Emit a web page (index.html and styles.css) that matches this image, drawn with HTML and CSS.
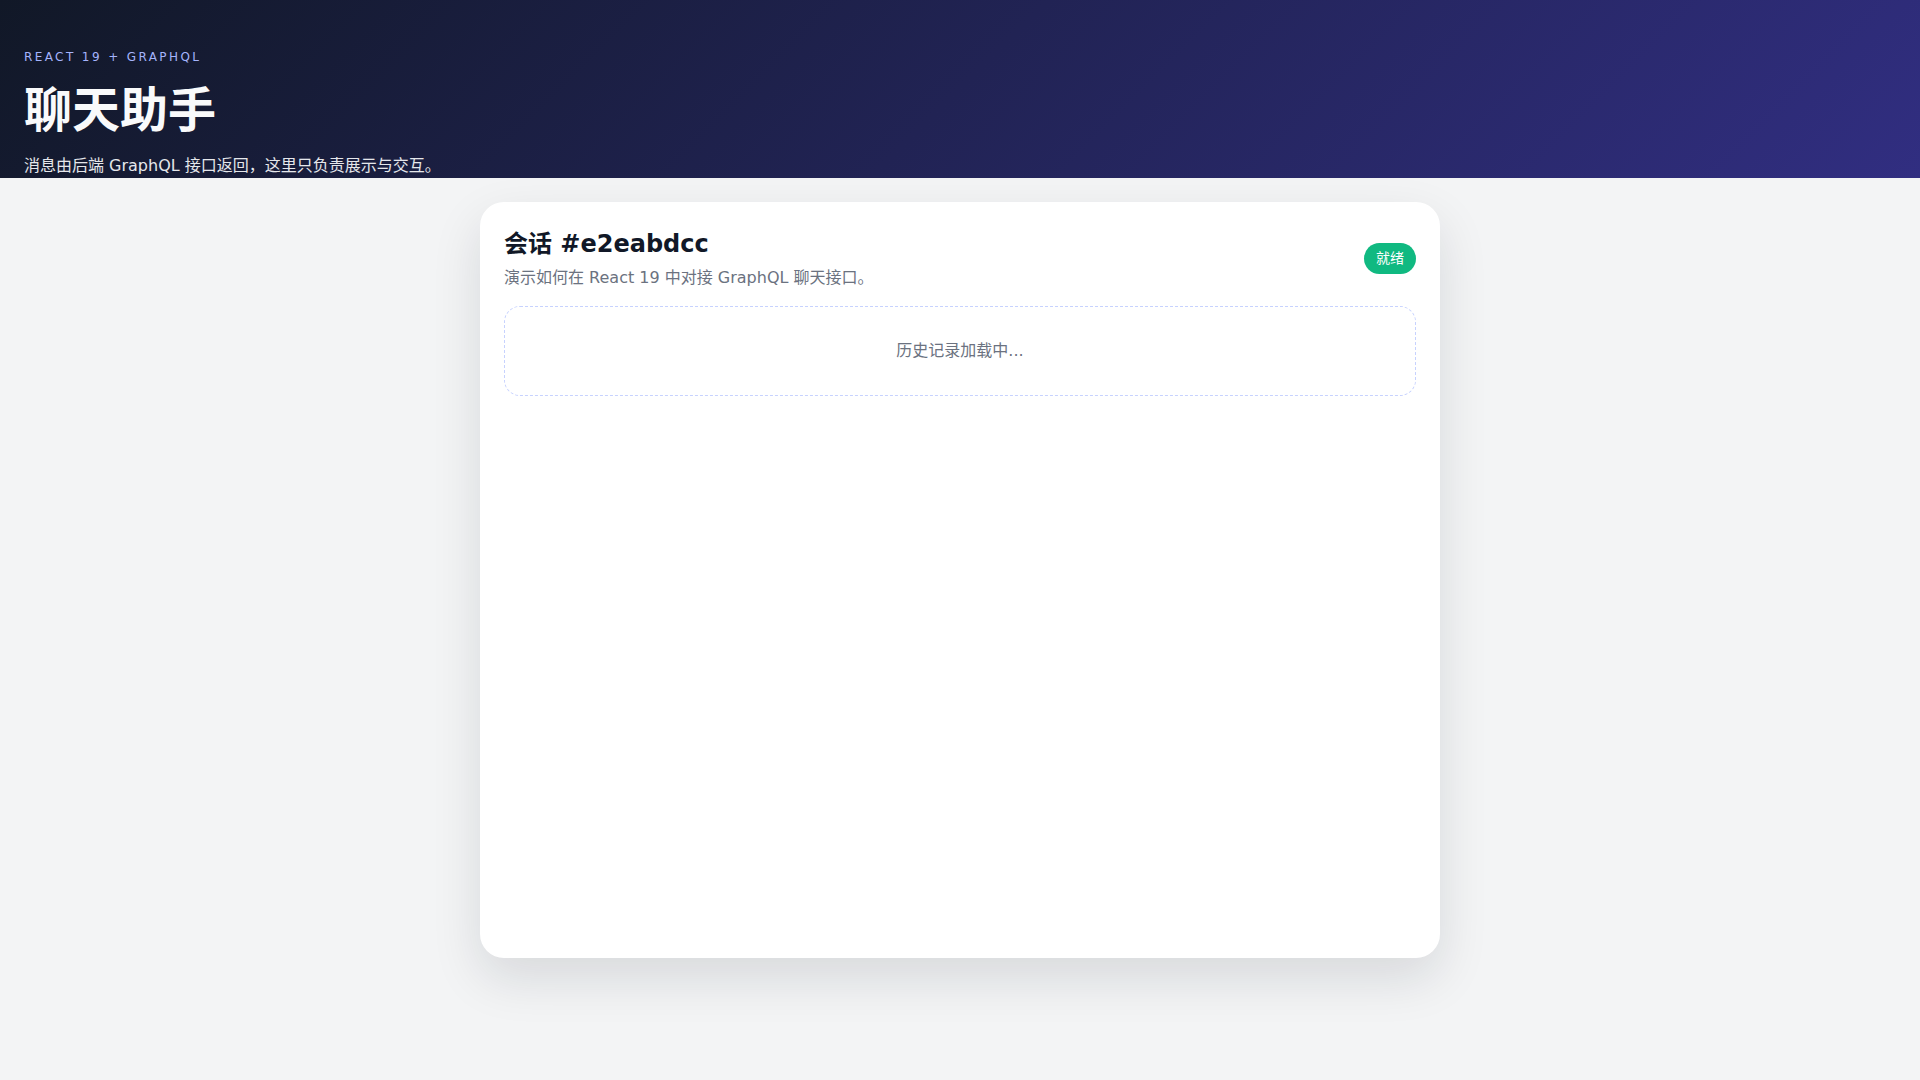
FILE: index.html
```html
<!DOCTYPE html>
<html lang="zh-CN">
<head>
<meta charset="utf-8">
<title>聊天助手</title>
<link rel="stylesheet" href="styles.css">
</head>
<body>
<header class="hero">
  <p class="eyebrow">React 19 + GraphQL</p>
  <h1 class="hero-title">聊天助手</h1>
  <p class="hero-sub">消息由后端 GraphQL 接口返回，这里只负责展示与交互。</p>
</header>
<main class="main">
  <section class="card">
    <div class="card-head">
      <div class="card-head-text">
        <h2 class="card-title">会话 #e2eabdcc</h2>
        <p class="card-sub">演示如何在 React 19 中对接 GraphQL 聊天接口。</p>
      </div>
      <span class="badge">就绪</span>
    </div>
    <div class="loading">历史记录加载中...</div>
  </section>
</main>
</body>
</html>
```

FILE: styles.css
```css
* {
  box-sizing: border-box;
}

html, body {
  margin: 0;
  padding: 0;
}

body {
  background: #f3f4f5;
  font-family: "DejaVu Sans", "Noto Sans CJK SC", sans-serif;
  color: #111827;
  min-height: 100vh;
}

.hero {
  height: 178px;
  padding: 49px 24px 0;
  background: linear-gradient(135deg, #111827 0%, #312e81 100%);
  color: #f9fafb;
}

.eyebrow {
  margin: 0 0 17px;
  font-size: 12px;
  line-height: 16px;
  letter-spacing: 0.2em;
  text-transform: uppercase;
  color: #a5b4fc;
}

.hero-title {
  margin: 0 0 14px;
  font-size: 48px;
  line-height: 57.6px;
  font-weight: 700;
  color: #f9fafb;
}

.hero-sub {
  margin: 0;
  font-size: 16px;
  line-height: 24px;
  color: #e5e7eb;
}

.main {
  padding-top: 24px;
  display: flex;
  justify-content: center;
}

.card {
  width: 960px;
  height: 70vh;
  background: #ffffff;
  border-radius: 24px;
  padding: 24px;
  box-shadow: 0 20px 50px rgba(15, 23, 42, 0.12);
  display: flex;
  flex-direction: column;
  gap: 16px;
}

.card-head {
  display: flex;
  justify-content: space-between;
  align-items: center;
  gap: 16px;
}

.card-title {
  margin: 0;
  font-size: 24px;
  line-height: 36px;
  font-weight: 700;
  color: #111827;
}

.card-sub {
  margin: 4px 0 0;
  font-size: 16px;
  line-height: 24px;
  color: #6b7280;
}

.badge {
  display: inline-block;
  padding: 6px 12px;
  border-radius: 999px;
  background: #10b981;
  color: #ffffff;
  font-size: 14px;
  line-height: 19px;
  white-space: nowrap;
}

.loading {
  border: 1px dashed #c7d2fe;
  border-radius: 16px;
  padding: 32px;
  text-align: center;
  font-size: 16px;
  line-height: 24px;
  color: #6b7280;
}
```
